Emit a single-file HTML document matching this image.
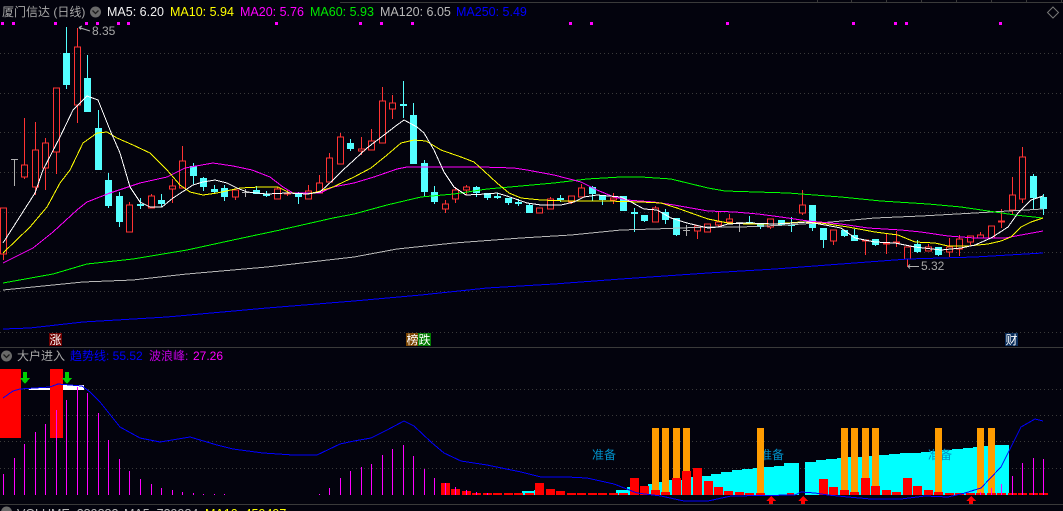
<!DOCTYPE html>
<html lang="zh-CN"><head><meta charset="utf-8"><title>厦门信达</title>
<style>
html,body{margin:0;padding:0;background:#03030d;width:1063px;height:511px;overflow:hidden}
svg{display:block}
text{font-family:"Liberation Sans","Noto Sans CJK SC",sans-serif}
.c{shape-rendering:crispEdges}
.l{fill:none;stroke-width:1;shape-rendering:crispEdges}
.g{stroke:#3a3a3a;stroke-width:1;stroke-dasharray:1 3}
</style></head><body>
<svg width="1063" height="511" viewBox="0 0 1063 511" xmlns="http://www.w3.org/2000/svg">
<rect width="1063" height="511" fill="#03030d"/>
<g class="c">
<path class="g" d="M0 53.5H1063M0 93.5H1063M0 132.5H1063M0 172.5H1063M0 212.5H1063M0 252.5H1063M0 291.5H1063M0 332.5H1063M0 389.5H1063M0 415.5H1063M0 441.5H1063M0 468.5H1063"/>
<path stroke="#3a3a3a" fill="none" d="M340 2.5H1063M0 347.5H1063M0 504.5H1063M817.5 0V3M851.5 0V3M886.5 0V3M921.5 0V3M956.5 0V3M991.5 0V3M1026.5 0V3M1061.5 0V3"/>
<path fill="#ff00ff" d="M1 22h3v3h-3zM12 22h3v3h-3zM54 22h3v3h-3zM85 22h3v3h-3zM96 22h3v3h-3zM117 22h3v3h-3zM127 22h3v3h-3zM275 22h3v3h-3zM359 22h3v3h-3zM380 22h3v3h-3zM411 22h3v3h-3zM569 22h3v3h-3zM590 22h3v3h-3zM726 22h3v3h-3zM852 22h3v3h-3zM894 22h3v3h-3zM905 22h3v3h-3zM999 22h3v3h-3z"/>
</g>

<!-- header -->
<text x="2" y="16" font-size="12" fill="#a8a8a8">厦门信达 (日线)</text>
<circle cx="95.5" cy="12" r="5.5" fill="#6a6a6a"/><path d="M92.5 10.5l3 3 3-3" fill="none" stroke="#1c1c1c" stroke-width="1.3"/>
<text x="107" y="16" font-size="12.5" fill="#f0f0f0">MA5: 6.20</text>
<text x="170" y="16" font-size="12.5" fill="#ffff00">MA10: 5.94</text>
<text x="240" y="16" font-size="12.5" fill="#ff00ff">MA20: 5.76</text>
<text x="310" y="16" font-size="12.5" fill="#00e800">MA60: 5.93</text>
<text x="380" y="16" font-size="12.5" fill="#b8b8b8">MA120: 6.05</text>
<text x="456" y="16" font-size="12.5" fill="#0000ff">MA250: 5.49</text>
<path d="M1053 7l5.5 5.5-5.5 5.5-5.5-5.5z" fill="none" stroke="#777" stroke-width="1"/>

<!-- candles: red -->
<path class="c" fill="none" stroke="#ff3333" d="M0.5 208h6v46h-6zM3.5 254v6M21.5 165h6v12h-6zM24.5 118v47M24.5 177v2M32.5 150h6v37h-6zM35.5 122v28M35.5 187v8M42.5 143h6v25h-6zM45.5 138v5M45.5 168v22M53.5 88h6v64h-6zM56.5 152v22M74.5 47h6v58h-6zM77.5 28v19M77.5 105v18M126.5 205h6v27h-6zM129.5 202v3M148.5 196h6v12h-6zM151.5 194v2M169.5 186h6v3h-6zM172.5 179v7M172.5 189v14M179.5 161h6v27h-6zM182.5 146v15M232.5 190h6v7h-6zM235.5 197v3M274.5 189h6v10h-6zM277.5 187v2M284.5 193h6v1h-6zM287.5 190v3M287.5 194v2M305.5 191h6v8h-6zM308.5 185v6M316.5 183h6v10h-6zM319.5 175v8M326.5 158h6v24h-6zM329.5 153v5M337.5 137h6v27h-6zM340.5 133v4M358.5 149h6v2h-6zM361.5 137v12M361.5 151v4M368.5 141h6v9h-6zM371.5 129v12M379.5 101h6v42h-6zM382.5 87v14M389.5 103h6v6h-6zM392.5 95v8M392.5 109v10M442.5 204h6v5h-6zM445.5 200v4M445.5 209v4M452.5 190h6v9h-6zM455.5 187v3M455.5 199v4M463.5 187h6v3h-6zM466.5 185v2M466.5 190v5M536.5 208h6v5h-6zM547.5 199h6v10h-6zM550.5 197v2M568.5 196h6v6h-6zM571.5 202v2M578.5 188h6v9h-6zM581.5 184v4M610.5 198h6v2h-6zM613.5 193v5M613.5 200v4M652.5 208h6v14h-6zM655.5 206v2M694.5 226h6v5h-6zM697.5 231v8M704.5 224h6v8h-6zM715.5 222h6v3h-6zM718.5 212v10M718.5 225v2M726.5 219h6v3h-6zM729.5 214v5M767.5 219h6v8h-6zM770.5 227v2M799.5 205h6v8h-6zM802.5 190v15M802.5 213v2M830.5 230h6v11h-6zM833.5 241v4M862.5 240h6v1h-6zM865.5 241v14M883.5 243h6v1h-6zM886.5 234v9M886.5 244v10M893.5 242h6v1h-6zM896.5 231v11M896.5 243v4M904.5 247h6v12h-6zM907.5 259v8M925.5 247h6v4h-6zM928.5 244v3M946.5 247h6v5h-6zM949.5 238v9M949.5 252v5M956.5 239h6v10h-6zM959.5 235v4M959.5 249v7M967.5 236h6v6h-6zM970.5 242v3M977.5 235h6v3h-6zM980.5 232v3M988.5 226h6v12h-6zM998.5 221h6v1h-6zM1001.5 209v12M1001.5 222v6M1009.5 195h6v15h-6zM1012.5 177v18M1012.5 210v5M1019.5 157h6v42h-6zM1022.5 147v10M1022.5 199v4"/>
<path class="c" fill="none" stroke="#ff3333" stroke-width="1" d="M862 240.5h7M883 243.5h7M893 242.5h7M998 221.5h7"/>

<!-- candles: cyan -->
<path class="c" fill="#54ffff" d="M63 53h7v32h-7zM84 78h7v34h-7zM95 128h7v42h-7zM105 180h7v26h-7zM116 196h7v26h-7zM137 204h7v2h-7zM158 200h7v4h-7zM190 166h7v10h-7zM200 178h7v9h-7zM211 189h7v3h-7zM221 188h7v9h-7zM253 190h7v4h-7zM263 194h7v2h-7zM295 193h7v4h-7zM347 143h7v6h-7zM400 104h7v2h-7zM410 115h7v49h-7zM421 163h7v29h-7zM431 192h7v10h-7zM473 187h7v6h-7zM484 193h7v5h-7zM494 196h7v2h-7zM505 198h7v5h-7zM515 202h7v2h-7zM526 205h7v8h-7zM557 198h7v2h-7zM589 187h7v7h-7zM599 195h7v5h-7zM620 196h7v15h-7zM631 212h7v2h-7zM641 215h7v6h-7zM662 212h7v8h-7zM673 218h7v17h-7zM746 222h7v2h-7zM757 223h7v4h-7zM778 220h7v5h-7zM788 225h7v1h-7zM809 205h7v23h-7zM820 228h7v12h-7zM841 230h7v6h-7zM851 235h7v6h-7zM872 239h7v6h-7zM914 244h7v8h-7zM935 247h7v8h-7zM1030 176h7v22h-7zM1040 197h7v12h-7z"/>
<path class="c" fill="none" stroke="#54ffff" d="M66.5 27v26M66.5 85v4M87.5 55v23M98.5 110v18M108.5 173v7M108.5 206v2M119.5 192v4M119.5 222v5M140.5 198v6M140.5 206v3M161.5 194v6M161.5 204v3M193.5 163v3M193.5 176v8M203.5 177v1M203.5 187v4M214.5 185v4M214.5 192v1M224.5 185v3M224.5 197v4M256.5 186v4M266.5 191v3M266.5 196v1M298.5 192v1M298.5 197v7M350.5 139v4M350.5 149v2M403.5 81v23M403.5 106v12M413.5 103v12M424.5 160v3M424.5 192v4M434.5 186v6M434.5 202v2M476.5 186v1M476.5 193v4M487.5 198v2M497.5 193v3M497.5 198v1M508.5 203v2M518.5 199v3M518.5 204v2M529.5 203v2M560.5 195v3M560.5 200v2M592.5 186v1M592.5 194v7M602.5 200v5M634.5 208v4M634.5 214v18M644.5 221v1M665.5 209v3M665.5 220v4M676.5 235v1M749.5 216v6M760.5 227v2M791.5 217v8M791.5 226v6M812.5 228v3M823.5 240v8M844.5 236v1M854.5 229v6M875.5 245v1M917.5 240v4M917.5 252v1M938.5 255v1M1033.5 174v2M1033.5 198v11M1043.5 194v3M1043.5 209v6"/>
<!-- gray doji -->
<path class="c" fill="none" stroke="#b0b0b0" d="M11 159.5h7M14.5 159v27M242 192.5h7M245.5 189v8M683 230.5h7M686.5 225v11M736 222.5h7M739.5 222v10"/>

<!-- moving averages -->
<polyline class="l" stroke="#0000ff" points="3,329 30,328 83,322 167,317 267,308 354,301 421,295 487,288 554,284 621,279 708,273 775,269 841,264 908,259 975,257 1043,253"/>
<polyline class="l" stroke="#b8b8b8" points="3,290 83,282 133,280 187,274 267,267 354,257 397,249 454,243 521,238 571,235 621,230 654,229 708,227 741,227 788,225 831,222 875,218 921,216 975,213 1008,211 1043,209"/>
<polyline class="l" stroke="#00ff00" points="3,283 53,274 87,264 133,259 187,250 233,240 280,230 333,218 354,214 387,205 421,197 454,194 487,189 521,186 554,183 587,179 621,177 641,177 671,179 708,188 725,191 788,193 841,197 881,201 928,204 961,207 995,212 1015,215 1043,218"/>
<polyline class="l" stroke="#ff00ff" points="3,263 33,248 53,232 77,210 87,202 110,193 140,183 167,177 185,168 213,163 233,166 252,170 270,177 283,187 293,193 320,193 333,187 354,183 374,177 397,169 407,167 454,167 481,167 514,168 527,170 554,175 581,182 597,190 614,197 627,200 654,202 674,205 708,211 735,212 758,214 781,217 808,221 841,224 868,228 901,230 921,232 948,236 975,238 1005,238 1021,235 1043,231"/>
<polyline class="l" stroke="#ffff00" points="3,253 30,227 47,207 60,183 70,170 83,143 97,133 107,132 117,138 133,145 150,153 167,170 180,185 190,192 203,195 217,193 240,188 260,187 278,187 290,193 307,194 317,192 333,187 354,177 371,168 387,155 401,143 414,140 426,141 441,150 461,157 474,162 484,171 497,183 509,193 521,198 541,200 567,201 587,201 607,201 641,202 661,203 677,208 691,213 708,219 728,223 748,224 775,224 801,222 821,223 848,227 875,232 898,235 915,242 935,243 948,246 968,246 988,244 1001,241 1011,237 1021,227 1031,222 1043,218"/>
<polyline class="l" stroke="#ffffff" points="3,243 35,193 43,170 60,137 73,110 87,96 98,100 110,130 120,153 130,187 140,202 150,207 162,207 173,198 193,185 203,182 215,180 227,183 237,188 247,192 267,194 287,193 308,194 320,192 333,180 343,170 354,160 367,148 384,135 397,125 404,120 417,127 424,133 434,150 444,172 454,187 466,195 487,194 497,193 507,196 527,203 541,205 561,205 574,202 584,197 597,195 621,197 631,202 644,209 657,210 671,218 687,223 708,228 718,227 728,224 748,223 775,224 795,223 808,222 825,225 841,228 855,238 875,242 895,243 915,247 941,250 961,248 975,245 991,238 1008,227 1018,213 1031,200 1043,196"/>

<!-- annotations -->
<path d="M90 31L79 27.5M79 27.5l3-1.5M79 27.5l2 2" fill="none" stroke="#b0b0b0" stroke-width="1"/>
<text x="92" y="35" font-size="12" fill="#a8a8a8">8.35</text>
<path d="M919 266.5H908M908 266.5l2-2M908 266.5l2 2" fill="none" stroke="#b0b0b0" stroke-width="1"/>
<text x="921" y="270" font-size="12" fill="#a8a8a8">5.32</text>

<g class="c">
<rect x="49" y="333" width="13" height="13" fill="#6e0000"/>
<rect x="406" y="333" width="12" height="13" fill="#7a4400"/>
<rect x="418" y="333" width="13" height="13" fill="#007a00"/>
<rect x="1005" y="333" width="13" height="13" fill="#0a2e5c"/>
</g>
<text x="49.5" y="344" font-size="12" fill="#fff">涨</text>
<text x="406.5" y="344" font-size="12" fill="#fff">榜跌</text>
<text x="1005.5" y="344" font-size="12" fill="#fff">财</text>

<!-- sub panel header -->
<circle cx="6.5" cy="356" r="5.5" fill="#6a6a6a"/><path d="M3.5 354.5l3 3 3-3" fill="none" stroke="#1c1c1c" stroke-width="1.3"/>
<text x="17" y="360" font-size="12" fill="#a8a8a8">大户进入</text>
<text x="70" y="360" font-size="12" fill="#0000ff">趋势线: 55.52</text>
<text x="149" y="360" font-size="12" fill="#c000e0">波浪峰:</text><text x="193" y="360" font-size="12" fill="#ff00ff"> 27.26</text>

<g class="c">
<!-- cyan staircase -->
<path fill="#00ffff" d="M522 491h12v4h-12zM534 490h10v5h-10zM616 490h13v5h-13zM627 487h10v8h-10zM648 484h11v11h-11zM659 482h10v13h-10zM669 480h21v15h-21zM690 477h11v18h-11zM701 476h10v19h-10zM711 474h10v21h-10zM721 472h11v23h-11zM732 470h10v25h-10zM742 469h11v26h-11zM753 468h11v27h-11zM764 467h10v28h-10zM774 466h10v29h-10zM784 463h15v32h-15zM805 462h11v33h-11zM816 460h10v35h-10zM826 459h11v36h-11zM837 458h11v37h-11zM848 457h20v38h-20zM868 456h11v39h-11zM879 455h10v40h-10zM889 454h11v41h-11zM900 453h21v42h-21zM921 452h10v43h-10zM931 451h11v44h-11zM942 450h10v45h-10zM952 449h11v46h-11zM963 448h10v47h-10zM973 447h11v48h-11zM984 446h11v49h-11zM995 445h14v50h-14z"/>
</g>
<text x="592" y="459" font-size="12" fill="#0090c8">准备</text>
<text x="760" y="459" font-size="12" fill="#0090c8">准备</text>
<text x="928" y="459" font-size="12" fill="#0090c8">准备</text>
<g class="c">
<!-- orange bars -->
<path fill="#ff9c00" d="M652 428h7v67h-7zM662 428h7v67h-7zM673 428h7v67h-7zM683 428h7v67h-7zM757 428h7v67h-7zM841 428h7v67h-7zM851 428h7v67h-7zM862 428h7v67h-7zM872 428h7v67h-7zM935 428h7v67h-7zM977 428h7v67h-7zM988 428h7v67h-7z"/>
<!-- red bars & blocks -->
<path fill="#ff0000" d="M0 369h21v69h-21zM50 369h13v69h-13zM441 483h9v12h-9zM451 489h9v6h-9zM462 491h9v4h-9zM472 493h9v2h-9zM483 493h9v2h-9zM493 493h9v2h-9zM504 493h9v2h-9zM514 493h9v2h-9zM525 493h9v2h-9zM535 483h9v12h-9zM546 489h9v6h-9zM556 491h9v4h-9zM567 493h9v2h-9zM577 493h9v2h-9zM588 493h9v2h-9zM598 493h9v2h-9zM609 493h9v2h-9zM619 493h9v2h-9zM630 478h9v17h-9zM640 486h9v9h-9zM651 490h9v5h-9zM661 492h9v3h-9zM672 478h9v17h-9zM682 471h9v24h-9zM693 468h9v27h-9zM704 481h9v14h-9zM714 487h9v8h-9zM724 491h9v4h-9zM735 492h9v3h-9zM745 493h9v2h-9zM756 493h9v2h-9zM787 493h7v2h-7zM819 479h9v16h-9zM829 487h9v8h-9zM840 490h9v5h-9zM850 492h9v3h-9zM861 478h9v17h-9zM871 486h9v9h-9zM882 490h9v5h-9zM892 492h9v3h-9zM903 478h9v17h-9zM913 486h9v9h-9zM924 490h9v5h-9zM934 492h9v3h-9zM945 493h9v2h-9zM955 493h9v2h-9zM966 493h9v2h-9zM976 493h9v2h-9zM987 493h9v2h-9zM997 493h9v2h-9zM1008 493h9v2h-9zM1018 493h9v2h-9zM1029 493h9v2h-9zM1039 493h9v2h-9z"/>
<!-- white -->
<path fill="#ffffff" d="M63 385h21v5H63zM29 388h21v2H29z"/>
<!-- magenta bars -->
<path fill="none" stroke="#ff00ff" d="M3.5 474V495M14.5 458V495M24.5 444V495M35.5 432V495M45.5 424V495M56.5 410V495M66.5 400V495M77.5 387V495M87.5 393V495M98.5 413V495M108.5 440V495M119.5 459V495M129.5 471V495M140.5 479V495M151.5 484V495M161.5 488V495M172.5 490V495M182.5 492V495M193.5 493V495M203.5 494V495M214.5 494V495M224.5 494V495M319.5 494V495M329.5 488V495M340.5 478V495M350.5 471V495M361.5 467V495M371.5 464V495M382.5 455V495M392.5 449V495M403.5 445V495M413.5 456V495M424.5 469V495M434.5 478V495M445.5 483V495M455.5 487V495M466.5 490V495M476.5 492V495M487.5 493V495M980.5 492V495M991.5 488V495M1001.5 484V495M1012.5 476V495M1022.5 463V495M1033.5 458V495M1043.5 459V495"/>
<!-- arrows -->
<path fill="#00d000" d="M23 372h4v6h3l-5 6-5-6h3zM65 372h4v6h3l-5 6-5-6h3z"/>
<path fill="#ff0000" d="M771 496l5 5h-3v3h-4v-3h-3zM803 496l5 5h-3v3h-4v-3h-3zM971 496l5 5h-3v3h-4v-3h-3z"/>
</g>
<polyline class="l" stroke="#0000ff" points="3,398 13,391 20,389 50,387 58,384 82,386 90,392 100,402 120,427 140,438 160,442 190,437 217,445 233,449 263,453 293,455 317,455 340,444 354,441 371,438 387,430 404,421 414,426 431,442 444,453 461,461 487,465 521,472 541,477 567,477 587,478 614,484 637,493 661,496 684,501 708,501 731,496 795,495 801,492 815,493 828,495 848,497 871,499 901,499 925,496 948,497 965,493 981,488 1001,467 1021,427 1035,419 1043,421"/>

<!-- bottom panel -->
<circle cx="6.5" cy="512" r="5.5" fill="#6a6a6a"/>
<text x="17" y="518" font-size="12.5" fill="#b8b8b8">VOLUME: 389882</text>
<text x="124" y="518" font-size="12.5" fill="#b8b8b8">MA5: 739984</text>
<text x="205" y="518" font-size="12.5" fill="#ffff00">MA10: 459497</text>
</svg>
</body></html>
